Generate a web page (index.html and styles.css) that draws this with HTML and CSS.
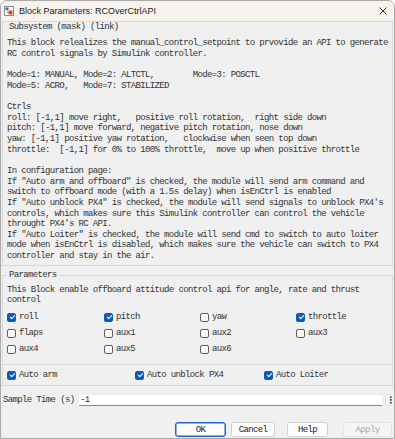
FILE: index.html
```
<!DOCTYPE html>
<html>
<head>
<meta charset="utf-8">
<title>Block Parameters: RCOverCtrlAPI</title>
<link rel="stylesheet" href="styles.css">
</head>
<body>
<div class="window">
<div class="titlebar">
<svg class="app-icon" width="10" height="10" viewBox="0 0 10 10">
<rect x="0.5" y="0.5" width="9" height="9" fill="#fff" stroke="#8d8d8d"/>
<rect x="1.5" y="1.5" width="3" height="2.5" fill="#2f6db5"/>
<path d="M3 4v2.5h1.5" fill="none" stroke="#777" stroke-width="0.6"/>
<rect x="4.5" y="4.5" width="4" height="4" fill="#d9472c"/>
</svg>
<span class="title">Block Parameters: RCOverCtrlAPI</span>
<svg class="close" width="8" height="8" viewBox="0 0 8 8">
<path d="M0.5 0.5L7.5 7.5M7.5 0.5L0.5 7.5" stroke="#222" stroke-width="0.9"/>
</svg>
</div>

<div class="mask">
<div class="mask-title">Subsystem (mask) (link)</div>
<pre class="desc">This block relealizes the manual_control_setpoint to prvovide an API to generate
RC control signals by Simulink controller.

Mode=1: MANUAL, Mode=2: ALTCTL,        Mode=3: POSCTL
Mode=5: ACRO,   Mode=7: STABILIZED

Ctrls
roll: [-1,1] move right,   positive roll rotation,  right side down
pitch: [-1,1] move forward, negative pitch rotation, nose down
yaw: [-1,1] positive yaw rotation,   clockwise when seen top down
throttle:  [-1,1] for 0% to 100% throttle,  move up when positive throttle

In configuration page:
If "Auto arm and offboard" is checked, the module will send arm command and
switch to offboard mode (with a 1.5s delay) when isEnCtrl is enabled
If "Auto unblock PX4" is checked, the module will send signals to unblock PX4's
controls, which makes sure this Simulink controller can control the vehicle
throught PX4's RC API.
If "Auto Loiter" is checked, the module will send cmd to switch to auto loiter
mode when isEnCtrl is disabled, which makes sure the vehicle can switch to PX4
controller and stay in the air.</pre>
</div>

<fieldset class="params">
<legend>Parameters</legend>
<p class="note">This Block enable offboard attitude control api for angle, rate and thrust control</p>
<div class="checks">
<label class="check"><span class="box on"></span>roll</label>
<label class="check"><span class="box on"></span>pitch</label>
<label class="check"><span class="box"></span>yaw</label>
<label class="check"><span class="box on"></span>throttle</label>
<label class="check"><span class="box"></span>flaps</label>
<label class="check"><span class="box"></span>aux1</label>
<label class="check"><span class="box"></span>aux2</label>
<label class="check"><span class="box"></span>aux3</label>
<label class="check"><span class="box"></span>aux4</label>
<label class="check"><span class="box"></span>aux5</label>
<label class="check"><span class="box"></span>aux6</label>
</div>
</fieldset>

<div class="autos">
<label class="check"><span class="box on"></span>Auto arm</label>
<label class="check"><span class="box on"></span>Auto unblock PX4</label>
<label class="check"><span class="box on"></span>Auto Loiter</label>
</div>

<div class="sample">
<span class="sample-label">Sample Time (s)</span>
<div class="field">-1</div>
<span class="more">⋮</span>
</div>

<div class="buttons">
<button class="btn btn-ok">OK</button>
<button class="btn btn-cancel">Cancel</button>
<button class="btn btn-help">Help</button>
<button class="btn btn-apply">Apply</button>
</div>
</div>
</body>
</html>
```

FILE: styles.css
```
*{
box-sizing:border-box;
}
body{
margin:0;
background:#fff;
}
.window{
width:395px;
height:439px;
border:1px solid #a9a9a9;
border-radius:7px 7px 0 0;
background:#f0f0f0;
overflow:hidden;
font-family:"Liberation Mono", monospace;
font-size:9px;
letter-spacing:-0.64px;
color:#333;
}

/* title bar */
.titlebar{
height:20px;
background:#f8f2ed;
display:flex;
align-items:center;
padding-left:3px;
}
.title{
font-family:"Liberation Sans Narrow", "Liberation Sans", sans-serif;
font-size:9px;
letter-spacing:0;
color:#1b1b1b;
margin-left:5px;
}
.close{
margin-left:auto;
margin-right:7px;
}

/* mask description */
.mask{
margin:0 1px;
border:1px solid #d9d9d9;
padding:0 3px 3px 4px;
}
.mask-title{
line-height:11px;
padding-left:2px;
}
.desc{
margin:5px 0 0;
font:inherit;
line-height:10.65px;
white-space:pre;
}

/* parameters */
.params{
margin:4px 1px 0;
padding:4px 4px 7px;
border:1px solid #d9d9d9;
min-width:0;
}
.params legend{
padding:0 2px;
line-height:11px;
}
.note{
margin:0;
line-height:10.65px;
}
.checks{
display:grid;
grid-template-columns:97px 96px 96px 1fr;
grid-auto-rows:16px;
margin-top:3px;
}
.check{
display:flex;
align-items:center;
}
.box{
width:9px;
height:9px;
border:1px solid #5f5f5f;
border-radius:2px;
background:#fafafa;
margin-right:3px;
position:relative;
flex:none;
}
.box.on{
background:#0b5cc0;
border-color:#0b5cc0;
}
.box.on::after{
content:"";
position:absolute;
left:1.6px;
top:1.4px;
width:4px;
height:2px;
border-left:1px solid #fff;
border-bottom:1px solid #fff;
transform:rotate(-45deg);
}

.autos{
margin:0 1px;
border:1px solid #d9d9d9;
border-top:0;
height:21px;
padding-left:4px;
display:grid;
grid-template-columns:128px 129px 1fr;
align-items:center;
}

/* sample time */
.sample{
display:flex;
align-items:center;
margin-top:7.5px;
padding-left:2px;
height:12px;
}
.sample-label{
width:76px;
}
.field{
width:303px;
height:12px;
background:#fff;
border-top:1px solid #ececec;
border-bottom:1px solid #8a8a8a;
padding-left:1px;
line-height:10px;
}
.more{
width:7px;
height:12px;
margin-left:3px;
background:#f7f7f7;
border:1px solid #e0e0e0;
border-radius:2px;
font-family:"DejaVu Sans", sans-serif;
font-size:9px;
font-weight:bold;
line-height:10px;
text-align:center;
letter-spacing:0;
color:#333;
}

/* buttons */
.buttons{
display:flex;
justify-content:flex-end;
margin-top:16.5px;
padding-right:2px;
}
.btn{
height:15px;
padding:0;
border:1px solid #d0d0d0;
border-radius:3px;
background:#fdfdfd;
font:inherit;
letter-spacing:-0.64px;
color:#222;
}
.btn-ok{width:51px;border-color:#1e66c1;box-shadow:inset 0 0 0 0.5px #1e66c1;}
.btn-cancel{width:44px;margin-left:5px;}
.btn-help{width:41px;margin-left:12px;}
.btn-apply{width:49px;margin-left:15px;color:#a8a8a8;background:#f5f5f5;border-color:#e3e3e3;}
```
